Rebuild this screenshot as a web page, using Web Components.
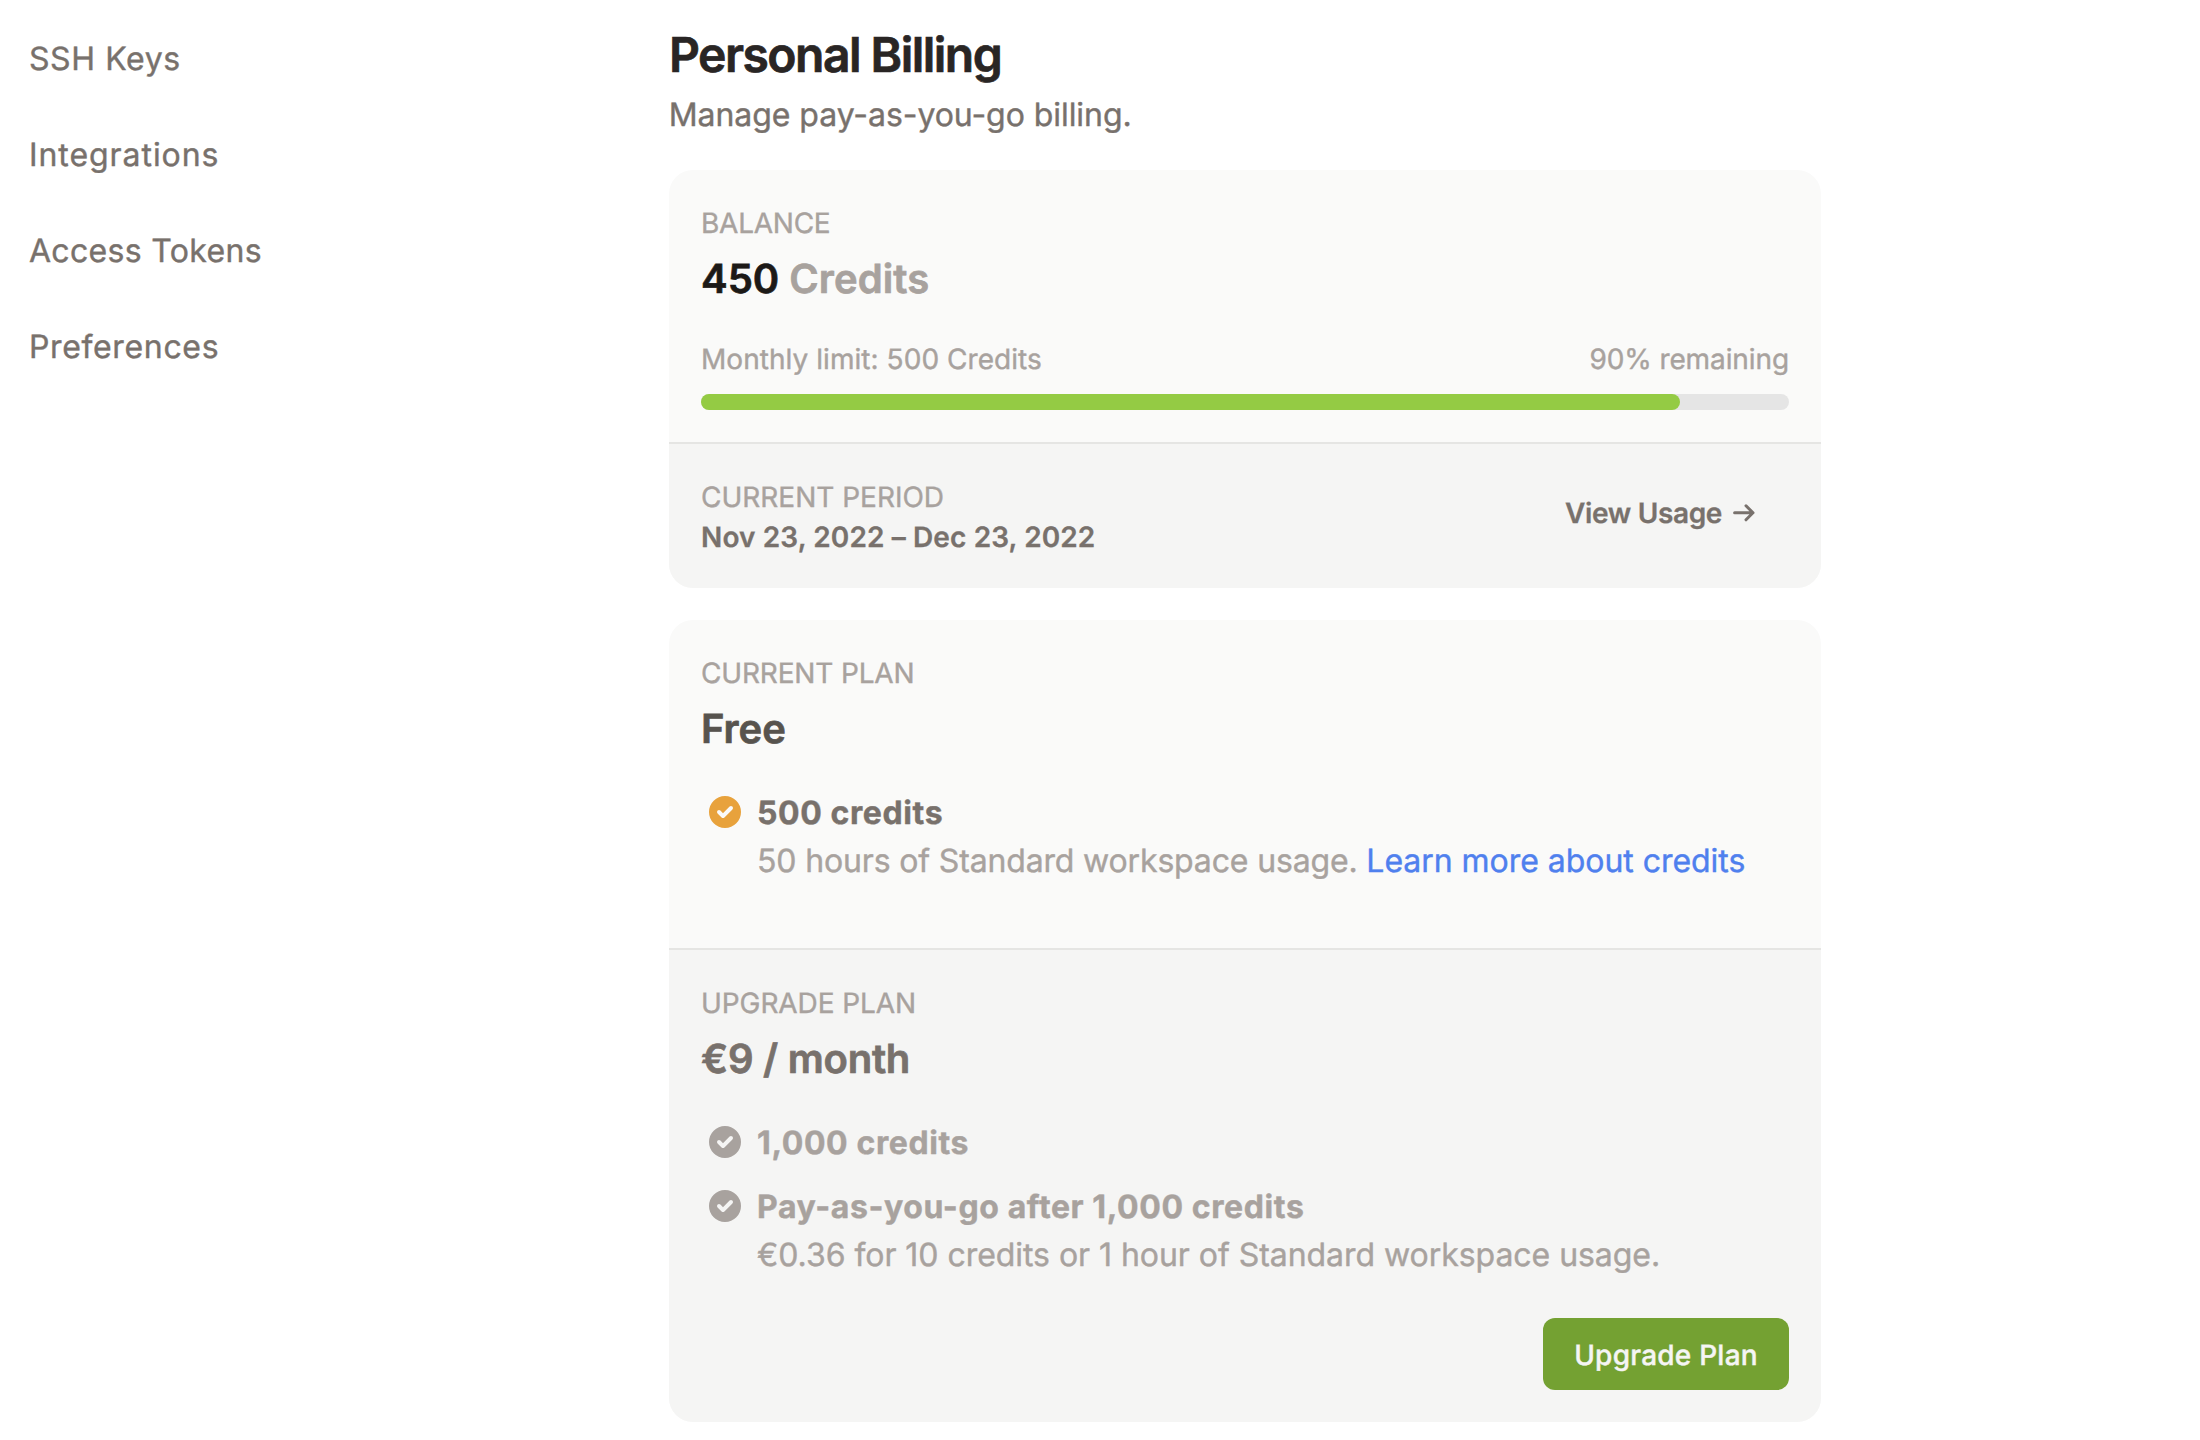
<!DOCTYPE html>
<html lang="en">
<head>
<meta charset="utf-8">
<title>Personal Billing</title>
<style>
  html, body { margin: 0; background: #fff; }
  body { font-family: Inter, "Liberation Sans", sans-serif; font-size: 32px; line-height: 48px; text-rendering: geometricPrecision; -webkit-text-stroke: .4px; height: 1440px; overflow: hidden; }
</style>
</head>
<body>
<billing-page>
  <settings-nav slot="nav">
    <nav-item style="letter-spacing:.62px">SSH Keys</nav-item>
    <nav-item style="letter-spacing:.95px">Integrations</nav-item>
    <nav-item style="letter-spacing:.33px">Access Tokens</nav-item>
    <nav-item style="letter-spacing:.66px">Preferences</nav-item>
  </settings-nav>
  <page-heading>Personal Billing<span slot="sub">Manage pay-as-you-go billing.</span></page-heading>
  <billing-card>
    <card-label style="letter-spacing:-.25px">Balance</card-label>
    <card-value style="--fg:#1c1917;letter-spacing:0">450 <span style="color:#a8a29e;letter-spacing:.1px">Credits</span></card-value>
    <credit-meter value="90"><span style="letter-spacing:.05px">Monthly limit: 500 Credits</span><span slot="end" style="letter-spacing:-.1px">90% remaining</span></credit-meter>
    <period-row slot="footer">
      <card-label>Current Period</card-label>
      <span slot="range">Nov 23, 2022 – Dec 23, 2022</span>
      <usage-link slot="action">View Usage</usage-link>
    </period-row>
  </billing-card>
  <billing-card>
    <card-label style="letter-spacing:-.16px">Current Plan</card-label>
    <card-value style="--fg:#57534e">Free</card-value>
    <plan-feature style="--dot:#e8a23c;--fg:#78716c;margin-top:32px;margin-bottom:32px">500 credits<span slot="detail" style="letter-spacing:-.155px">50 hours of Standard workspace usage. <a style="color:#4f80ee;letter-spacing:-.04px">Learn more about credits</a></span></plan-feature>
    <card-label slot="footer" style="letter-spacing:-.07px">Upgrade Plan</card-label>
    <card-value slot="footer" style="--fg:#78716c;letter-spacing:-.25px">€9 / month</card-value>
    <plan-feature slot="footer" style="--dot:#a8a29e;--fg:#a8a29e;margin-top:32px">1,000 credits</plan-feature>
    <plan-feature slot="footer" style="--dot:#a8a29e;--fg:#a8a29e;margin-top:16px">Pay-as-you-go after 1,000 credits<span slot="detail" style="letter-spacing:-.045px">€0.36 for 10 credits or 1 hour of Standard workspace usage.</span></plan-feature>
    <action-button slot="footer">Upgrade Plan</action-button>
  </billing-card>
</billing-page>
<script>
const define = (name, html) => customElements.define(name, class extends HTMLElement {
  constructor() {
    super();
    this.attachShadow({ mode: 'open' }).innerHTML = html;
  }
  connectedCallback() {
    if (this.hasAttribute('value')) this.style.setProperty('--value', this.getAttribute('value') + '%');
  }
});

define('billing-page', `<style>
  :host { display: grid; grid-template-columns: 640px 1181px; align-items: start; }
  main { display: flex; flex-direction: column; gap: 32px; padding-top: 24px; margin-left: 29px; }
</style><slot name="nav"></slot><main><slot></slot></main>`);

define('settings-nav', `<style>
  :host { display: flex; flex-direction: column; gap: 48px; padding: 35px 0 0 28.9px; }
</style><slot></slot>`);

define('nav-item', `<style>
  :host { display: block; height: 48px; color: #78716c; }
</style><slot></slot>`);

define('page-heading', `<style>
  :host { display: block; }
  h1 { margin: 0; height: 66px; font-size: 48px; line-height: 62px; font-weight: 600; letter-spacing: -1.52px; color: #292524; -webkit-text-stroke: .7px; }
  p { margin: 0 0 0 -.3px; height: 48px; line-height: 50px; color: #78716c; letter-spacing: -.055px; }
</style><h1><slot></slot></h1><p><slot name="sub"></slot></p>`);

define('billing-card', `<style>
  :host { display: block; border-radius: 24px; overflow: hidden; background: #fafaf9; }
  .body { padding: 32px; }
  footer { display: block; padding: 32px; background: #f5f5f4; border-top: 2px solid #e5e5e3; }
</style><div class="body"><slot></slot></div><footer><slot name="footer"></slot></footer>`);

define('card-label', `<style>
  :host { display: block; font-size: 28px; height: 40px; line-height: 42px; color: #a8a29e; text-transform: uppercase; }
</style><slot></slot>`);

define('card-value', `<style>
  :host { display: block; margin-top: 8px; font-size: 40px; height: 56px; line-height: 58px; font-weight: 600; color: var(--fg); -webkit-text-stroke: .7px; }
</style><slot></slot>`);

define('credit-meter', `<style>
  :host { display: block; margin-top: 32px; font-size: 28px; line-height: 42px; color: #a8a29e; }
  .row { display: flex; justify-content: space-between; height: 40px; }
  .track { margin-top: 16px; height: 16px; border-radius: 8px; background: #e5e5e5; }
  .fill { width: var(--value); height: 100%; border-radius: 8px; background: #94cb44; }
</style><div class="row"><slot></slot><slot name="end"></slot></div><div class="track"><div class="fill"></div></div>`);

define('period-row', `<style>
  :host { display: flex; justify-content: space-between; align-items: flex-start; font-size: 28px; line-height: 42px; color: #78716c; }
  .range { height: 40px; font-weight: 600; letter-spacing: .117px; -webkit-text-stroke: .3px; }
  .action { height: 40px; padding-right: 33px; margin-top: 16px; }
</style><div><slot></slot><div class="range"><slot name="range"></slot></div></div><div class="action"><slot name="action"></slot></div>`);

define('usage-link', `<style>
  :host { display: flex; align-items: center; gap: 9px; font-weight: 600; letter-spacing: -.36px; -webkit-text-stroke: .3px; }
  svg { display: block; }
</style><slot></slot><svg width="25" height="24" viewBox="0 0 25 24" fill="none" stroke="currentColor" stroke-width="3" stroke-linecap="round" stroke-linejoin="round"><path d="M3.6 11.8H22M15 4.8L22 11.8L15 18.8"/></svg>`);

define('plan-feature', `<style>
  :host { display: grid; grid-template-columns: 40px 1fr; column-gap: 12px; margin-left: 4px; }
  svg { display: block; width: 40px; height: 40px; margin-top: 4px; fill: var(--dot); -webkit-text-stroke: 0; }
  b, .detail { display: block; height: 48px; line-height: 50px; white-space: nowrap; }
  b { font-weight: 700; letter-spacing: .6px; color: var(--fg); }
  .detail { color: #a8a29e; }
  .detail:not(.filled) { height: auto; }
  .detail slot::slotted(*) { display: block; height: 48px; }
</style><svg viewBox="0 0 20 20"><path fill-rule="evenodd" d="M10 18a8 8 0 100-16 8 8 0 000 16zm3.707-9.293a1 1 0 00-1.414-1.414L9 10.586 7.707 9.293a1 1 0 00-1.414 1.414l2 2a1 1 0 001.414 0l4-4z" clip-rule="evenodd"/></svg><div><b><slot></slot></b><div class="detail"><slot name="detail"></slot></div></div>`);

define('action-button', `<style>
  :host { display: flex; justify-content: flex-end; margin-top: 40px; }
  button { box-sizing: border-box; width: 246px; height: 72px; border: 0; border-radius: 12px; padding: 2px 0 0; background: #74a132; color: #f5f5f4; font: 500 28px/40px Inter, sans-serif; letter-spacing: .226px; text-rendering: inherit; }
</style><button><slot></slot></button>`);
</script>
</body>
</html>
